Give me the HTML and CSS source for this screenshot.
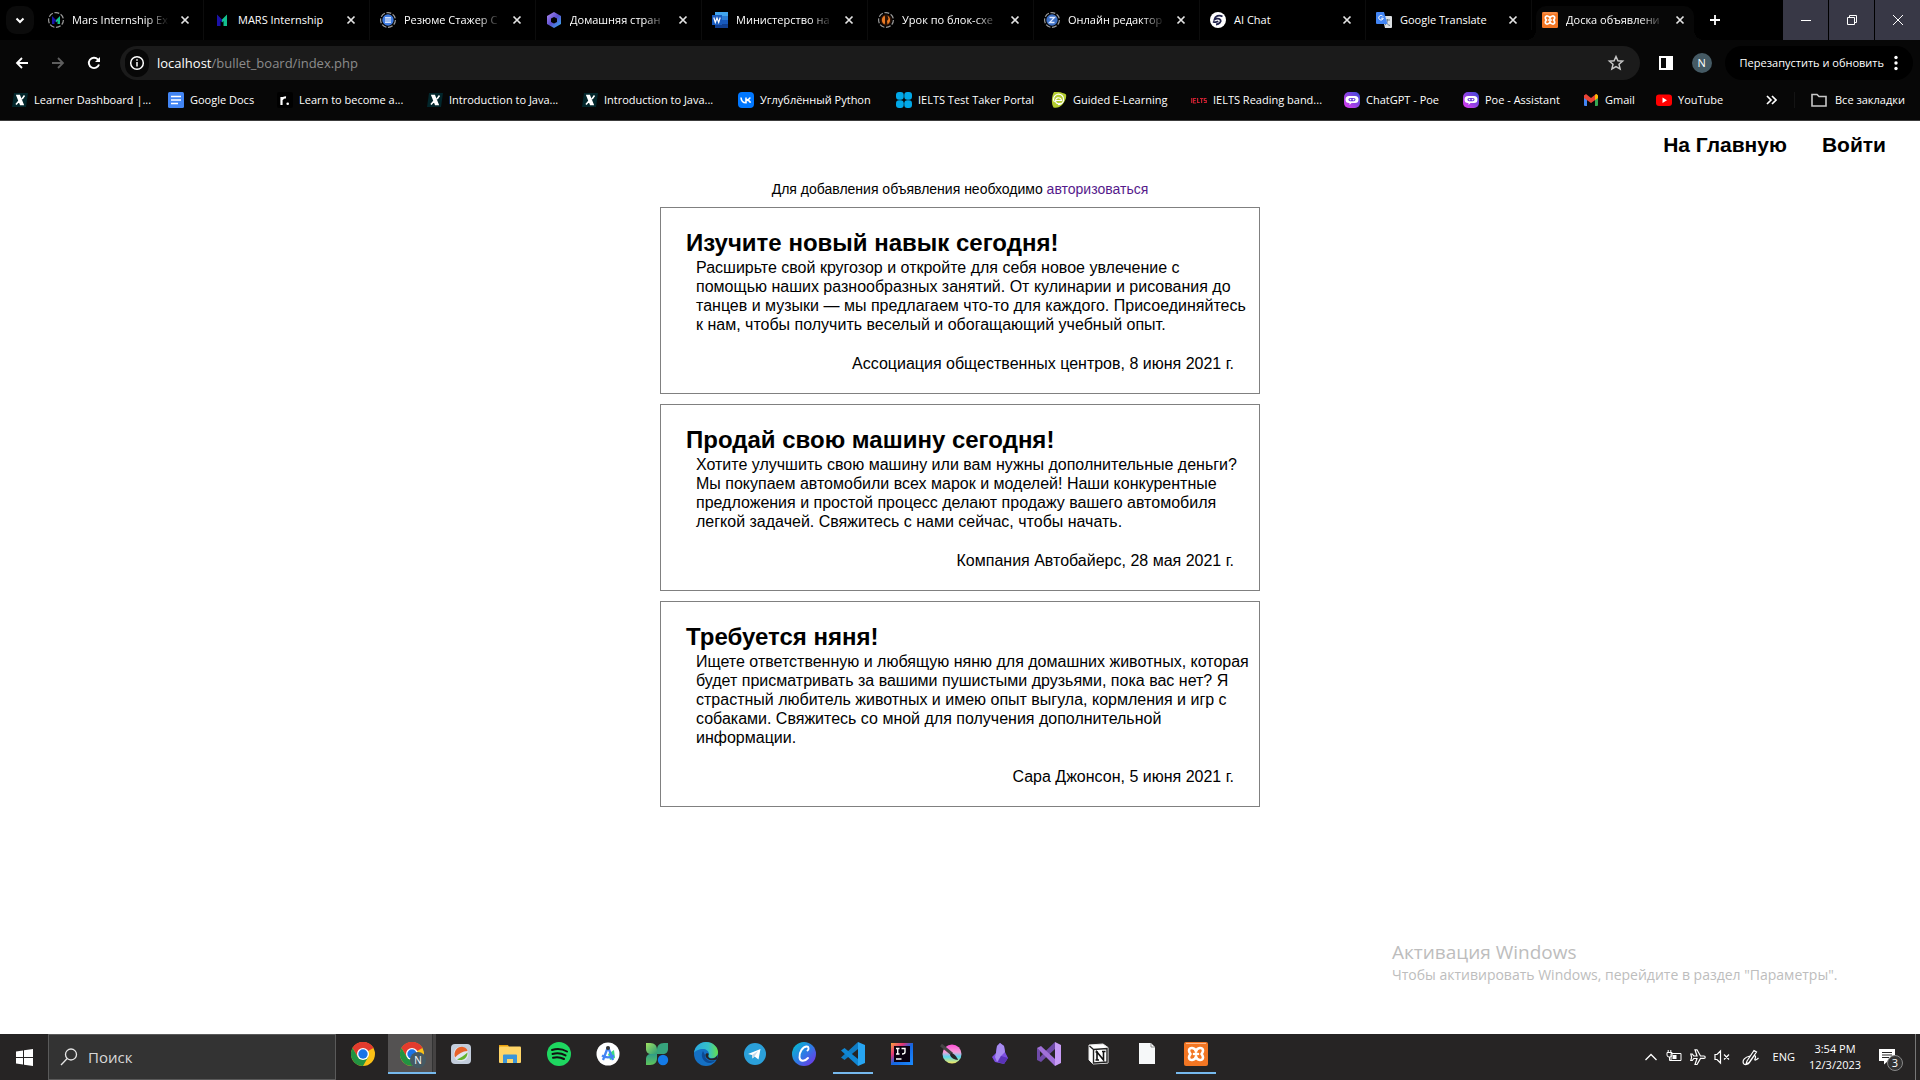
FILE: index.html
```
<!DOCTYPE html>
<html lang="ru">
<head>
<meta charset="utf-8">
<title>Доска объявлений</title>
<link rel="stylesheet" href="styles.css">
</head>
<body>
<svg class="defs" aria-hidden="true">
  <defs>
    <linearGradient id="poe" x1="0" y1="1" x2="1" y2="0"><stop offset="0" stop-color="#e23bf0"/><stop offset="1" stop-color="#3a4bd8"/></linearGradient>
    <linearGradient id="mars" x1="0" y1="0" x2="1" y2="0"><stop offset=".45" stop-color="#1b12a8"/><stop offset=".55" stop-color="#12c08e"/></linearGradient>
    <linearGradient id="m365" x1="0" y1="0" x2="1" y2="1"><stop offset="0" stop-color="#b48cf0"/><stop offset=".5" stop-color="#5a4fd0"/><stop offset="1" stop-color="#35b8f0"/></linearGradient>
    <linearGradient id="canva" x1="0" y1="0" x2="1" y2="1"><stop offset="0" stop-color="#00c4cc"/><stop offset=".5" stop-color="#2d7be5"/><stop offset="1" stop-color="#7d2ae8"/></linearGradient>
    <linearGradient id="edge" x1="0" y1="0" x2="1" y2="0"><stop offset="0" stop-color="#2aa9e0"/><stop offset=".6" stop-color="#35c1c8"/><stop offset="1" stop-color="#66e04a"/></linearGradient>
    <linearGradient id="leafA" x1="0" y1="0" x2="1" y2="1"><stop offset="0" stop-color="#9fe060"/><stop offset="1" stop-color="#2f9c78"/></linearGradient>
    <linearGradient id="leafB" x1="0" y1="0" x2="0" y2="1"><stop offset="0" stop-color="#2f9c88"/><stop offset="1" stop-color="#5fc45a"/></linearGradient>
    <linearGradient id="idea" x1="0" y1="0" x2="1" y2="1"><stop offset="0" stop-color="#f9a13c"/><stop offset=".3" stop-color="#e0337a"/><stop offset=".5" stop-color="#1565e0"/><stop offset="1" stop-color="#1a8cff"/></linearGradient>
    <linearGradient id="krita" x1="0" y1="0" x2="0" y2="1"><stop offset="0" stop-color="#ff4fd8"/><stop offset=".4" stop-color="#f7a0d8"/><stop offset=".65" stop-color="#58d8f0"/><stop offset="1" stop-color="#f8e85a"/></linearGradient>
    <symbol id="i-close" viewBox="0 0 16 16"><path d="M4.500 4.500l7 7M11.500 4.500l-7 7" stroke="#e3e3e3" stroke-width="1.700" fill="none"/></symbol>
    <symbol id="i-ring" viewBox="0 0 16 16"><circle cx="8" cy="8" r="7.400" fill="none" stroke="#9a9a9a" stroke-width="1.200" stroke-dasharray="5 1.600"/></symbol>
    <symbol id="i-x" viewBox="0 0 16 16"><path d="M2 1h14l-2 14H0z" fill="#02262b"/><path d="M5 3.500h2.400l3.600 9H8.600zM12.500 3.500L10 7M7 9l-3 3.500" stroke="#fff" stroke-width="1.600" fill="#fff"/></symbol>
    <symbol id="i-poe" viewBox="0 0 16 16"><rect width="16" height="16" rx="5" fill="url(#poe)"/><path d="M5 4h6a3 3 0 0 1 0 7H7.500L5.500 13v-2H5a3 3 0 0 1 0-7z" fill="#fff"/><rect x="4.500" y="6" width="7" height="3.200" rx="1.600" fill="#6a42d8"/><circle cx="6.500" cy="7.600" r=".8" fill="#fff"/><circle cx="9.500" cy="7.600" r=".8" fill="#fff"/></symbol>
    <symbol id="i-xampp" viewBox="0 0 24 24"><rect width="24" height="24" rx="2" fill="#f37623"/><path d="M2 1.500h20" stroke="#ffb98a" stroke-width="1"/><path d="M12 9.500C11 5 5 5 5 8.500c0 2 1 2.500 1.500 3.500C6 13 5 13.500 5 15.500c0 3.500 6 3.500 7-1 1 4.500 7 4.500 7 1 0-2-1-2.500-1.500-3.500.5-1 1.500-1.500 1.500-3.500 0-3.500-6-3.500-7 1zM10 12h4" fill="none" stroke="#fff" stroke-width="2.600" stroke-linecap="round" stroke-linejoin="round"/></symbol>
    <symbol id="i-chrome" viewBox="0 0 24 24"><circle cx="12" cy="12" r="12" fill="#fbc116"/><path d="M12 12L1.600 6A12 12 0 0 1 22.400 6z" fill="#e33b2e"/><path d="M12 6h10.400A12 12 0 0 0 1.600 6L6.800 15z" fill="#e33b2e"/><path d="M1.600 6A12 12 0 0 0 12 24l5.200-9L12 17.500 6.800 15z" fill="#229342"/><circle cx="12" cy="12" r="6" fill="#fff"/><circle cx="12" cy="12" r="4.700" fill="#1a73e8"/></symbol>
  </defs>
</svg>

<header class="browser">
  <div class="tabstrip">
    <button class="tab-search" aria-label="Поиск вкладок"><svg width="16" height="16" viewBox="0 0 16 16"><path d="M4.500 6.500L8 10l3.500-3.500" fill="none" stroke="#fff" stroke-width="2"/></svg></button>
    <div class="tab"><svg class="fav" viewBox="0 0 16 16"><use href="#i-ring"/><path d="M4 12V4l4 4 4-4v8H9.500V9L8 10.500 6.500 9v3z" fill="url(#mars)"/></svg><span class="tab-title tab-title--cut">Mars Internship Ex</span><button class="tab-close" aria-label="Закрыть"><svg viewBox="0 0 16 16"><use href="#i-close"/></svg></button></div>
    <div class="tab"><svg class="fav" viewBox="0 0 16 16"><path d="M3 14V2.500l5 5 5-5V14h-3.500V9L8 10.500 6.500 9v5z" fill="url(#mars)"/></svg><span class="tab-title">MARS Internship</span><button class="tab-close" aria-label="Закрыть"><svg viewBox="0 0 16 16"><use href="#i-close"/></svg></button></div>
    <div class="tab"><svg class="fav" viewBox="0 0 16 16"><use href="#i-ring"/><circle cx="8" cy="8" r="5.700" fill="#3f7be0"/><path d="M5 5.800h6M5 8h6M5 10.200h6" stroke="#fff" stroke-width="1.200"/></svg><span class="tab-title tab-title--cut">Резюме Стажер С</span><button class="tab-close" aria-label="Закрыть"><svg viewBox="0 0 16 16"><use href="#i-close"/></svg></button></div>
    <div class="tab"><svg class="fav" viewBox="0 0 16 16"><path d="M8 0l7 4v8l-7 4-7-4V4zM8 5L5 6.500v3.500L8 11.500 11 10V6.500z" fill="url(#m365)" fill-rule="evenodd"/></svg><span class="tab-title tab-title--cut">Домашняя стран</span><button class="tab-close" aria-label="Закрыть"><svg viewBox="0 0 16 16"><use href="#i-close"/></svg></button></div>
    <div class="tab"><svg class="fav" viewBox="0 0 16 16"><path d="M3 0h13v4H3z" fill="#41a5ee"/><path d="M3 4h13v4H3z" fill="#2b7cd3"/><path d="M3 8h13v4H3z" fill="#185abd"/><path d="M3 12h13v4H3z" fill="#103f91"/><rect y="3" width="10" height="10" fill="#185abd"/><path d="M1.800 5.500L3.300 10.500 5 6l1.700 4.500 1.500-5" fill="none" stroke="#fff" stroke-width="1.200"/></svg><span class="tab-title tab-title--cut">Министерство на</span><button class="tab-close" aria-label="Закрыть"><svg viewBox="0 0 16 16"><use href="#i-close"/></svg></button></div>
    <div class="tab"><svg class="fav" viewBox="0 0 16 16"><use href="#i-ring"/><circle cx="8" cy="8" r="5.700" fill="#2a1206"/><path d="M6.500 3.500C3 6 3 10 6.500 12.500L7 11V5zM9.500 3.500C13 6 13 10 9.500 12.500L9 9l1.500-2z" fill="#e87a24"/></svg><span class="tab-title tab-title--cut">Урок по блок-схе</span><button class="tab-close" aria-label="Закрыть"><svg viewBox="0 0 16 16"><use href="#i-close"/></svg></button></div>
    <div class="tab"><svg class="fav" viewBox="0 0 16 16"><use href="#i-ring"/><circle cx="8" cy="8" r="5.700" fill="#3c6fc4"/><path d="M5.500 5.500h5l-5 5h5" fill="none" stroke="#dce8ff" stroke-width="1.300"/></svg><span class="tab-title tab-title--cut">Онлайн редактор</span><button class="tab-close" aria-label="Закрыть"><svg viewBox="0 0 16 16"><use href="#i-close"/></svg></button></div>
    <div class="tab"><svg class="fav" viewBox="0 0 16 16"><circle cx="8" cy="8" r="8" fill="#fff"/><path d="M12.500 4.500C9 2.500 5 4 4.500 7.500c2-1.500 5-1 6 .5s-1 4-4.500 4.500M3 9.500c1.500 1 4 1 5-.5" fill="none" stroke="#20224a" stroke-width="1.800"/></svg><span class="tab-title">AI Chat</span><button class="tab-close" aria-label="Закрыть"><svg viewBox="0 0 16 16"><use href="#i-close"/></svg></button></div>
    <div class="tab"><svg class="fav" viewBox="0 0 16 16"><path d="M6 4h9a1 1 0 0 1 1 1v10a1 1 0 0 1-1 1H9z" fill="#dcdfe3"/><path d="M9 8h5M11.500 7v1c0 2-1 4-2.500 5M10 10c1 2 2 3 4 3.500" stroke="#6c7f8c" fill="none"/><path d="M1 0h7l3.500 12H1a1 1 0 0 1-1-1V1a1 1 0 0 1 1-1z" fill="#4285f4"/><path d="M7 4.500A2.300 2.300 0 1 0 7.300 6.200H5.200" fill="none" stroke="#fff"/></svg><span class="tab-title">Google Translate</span><button class="tab-close" aria-label="Закрыть"><svg viewBox="0 0 16 16"><use href="#i-close"/></svg></button></div>
    <div class="tab tab--active"><svg class="fav" viewBox="0 0 24 24"><use href="#i-xampp"/></svg><span class="tab-title tab-title--cut">Доска объявлени</span><button class="tab-close" aria-label="Закрыть"><svg viewBox="0 0 16 16"><use href="#i-close"/></svg></button></div>
    <button class="new-tab" aria-label="Новая вкладка"><svg width="16" height="16" viewBox="0 0 16 16"><path d="M8 3v10M3 8h10" stroke="#fff" stroke-width="1.800"/></svg></button>
    <div class="window-controls">
      <button aria-label="Свернуть"><svg width="12" height="12" viewBox="0 0 12 12"><path d="M1 6.500h10" stroke="#fff"/></svg></button>
      <button aria-label="Развернуть"><svg width="12" height="12" viewBox="0 0 12 12"><path d="M1.500 3.500h7v7h-7zM3.500 3.500v-2h7v7h-2" fill="none" stroke="#fff"/></svg></button>
      <button aria-label="Закрыть окно"><svg width="12" height="12" viewBox="0 0 12 12"><path d="M1 1l10 10M11 1L1 11" stroke="#fff"/></svg></button>
    </div>
  </div>

  <div class="toolbar">
    <button class="tool" aria-label="Назад"><svg width="16" height="16" viewBox="0 0 16 16"><path d="M14 8H3M8 3L3 8l5 5" fill="none" stroke="#fff" stroke-width="1.800"/></svg></button>
    <button class="tool" aria-label="Вперёд"><svg width="16" height="16" viewBox="0 0 16 16"><path d="M2 8h11M8 3l5 5-5 5" fill="none" stroke="#5e5e5e" stroke-width="1.800"/></svg></button>
    <button class="tool" aria-label="Обновить"><svg width="16" height="16" viewBox="0 0 16 16"><path d="M13 9.500A5.200 5.200 0 1 1 11.800 4.300L13 5.500" fill="none" stroke="#fff" stroke-width="1.900"/><path d="M14 2v5H9z" fill="#fff"/></svg></button>
    <div class="omnibox">
      <span class="site-info"><svg width="16" height="16" viewBox="0 0 16 16"><circle cx="8" cy="8" r="6.300" fill="none" stroke="#fff" stroke-width="1.500"/><path d="M8 7v4.500M8 4.300v1.500" stroke="#fff" stroke-width="1.500"/></svg></span>
      <a class="url" href="#"><span class="url-host">localhost</span>/bullet_board/index.php</a>
      <button class="star" aria-label="В закладки"><svg width="18" height="18" viewBox="0 0 18 18"><path d="M9 2.500l1.900 4.300 4.700.4-3.600 3.100 1.100 4.600L9 12.500l-4.100 2.400L6 10.300 2.400 7.200l4.700-.4z" fill="none" stroke="#c7c7c7" stroke-width="1.500"/></svg></button>
    </div>
    <button class="side-panel" aria-label="Боковая панель"><svg width="16" height="16" viewBox="0 0 16 16"><path d="M1 1h14v14H1zM3 3v10h5V3z" fill="#fff" fill-rule="evenodd"/></svg></button>
    <span class="avatar">N</span>
    <button class="update">Перезапустить и обновить<svg width="4" height="16" viewBox="0 0 4 16"><circle cx="2" cy="2.500" r="1.700" fill="#fff"/><circle cx="2" cy="8" r="1.700" fill="#fff"/><circle cx="2" cy="13.500" r="1.700" fill="#fff"/></svg></button>
  </div>

  <nav class="bookmarks" aria-label="Закладки">
    <a class="bm" href="#"><svg viewBox="0 0 16 16"><use href="#i-x"/></svg>Learner Dashboard |...</a>
    <a class="bm" href="#"><svg viewBox="0 0 16 16"><rect width="16" height="16" rx="1.500" fill="#4285f4"/><path d="M3 4.500h10M3 8h10M3 11.500h7" stroke="#fff" stroke-width="1.700"/></svg>Google Docs</a>
    <a class="bm" href="#"><svg viewBox="0 0 16 16"><rect width="16" height="16" rx="2" fill="#000"/><path d="M4.500 13V5M5 7.500c.8-1.700 2-2.200 4-2" fill="none" stroke="#fff" stroke-width="2.200"/><circle cx="10.700" cy="11.800" r="1.300" fill="#fff"/></svg>Learn to become a...</a>
    <a class="bm" href="#"><svg viewBox="0 0 16 16"><use href="#i-x"/></svg>Introduction to Java...</a>
    <a class="bm" href="#"><svg viewBox="0 0 16 16"><use href="#i-x"/></svg>Introduction to Java...</a>
    <a class="bm" href="#"><svg viewBox="0 0 16 16"><rect width="16" height="16" rx="4" fill="#07f"/><path d="M3 5.500c.3 3.500 2 5.300 5 5.300V5.500M8 8c2 0 3.500-1 4.200-2.500M8.500 8c2 .2 3.500 1.300 4 2.800" fill="none" stroke="#fff" stroke-width="1.600"/></svg>Углублённый Python</a>
    <a class="bm" href="#"><svg viewBox="0 0 16 16" fill="#00a8e8"><rect width="7.700" height="7.700" rx="3"/><rect x="8.300" width="7.700" height="7.700" rx="3"/><rect y="8.300" width="7.700" height="7.700" rx="3"/><rect x="8.300" y="8.300" width="7.700" height="7.700" rx="3"/></svg>IELTS Test Taker Portal</a>
    <a class="bm" href="#"><svg viewBox="0 0 16 16"><path d="M3 0c4-.5 9 .5 12 2.500.8 3-1 7-4 10.500-2 2-5 3.500-8.500 2.500C0 12 .5 4 3 0z" fill="#b4cc2e"/><path d="M5 8.500h5.500a3 3 0 1 0-1 2.500M3.500 10A5 5 0 1 1 12.500 8c0 3-3 5-5.500 4.500" fill="none" stroke="#fff" stroke-width="1.200"/></svg>Guided E-Learning</a>
    <a class="bm" href="#"><svg viewBox="0 0 16 16"><path d="M.7 6v5M2.500 6v5h2.700M2.500 6.500h2.700M2.500 8.500h2.200M6.600 6v4.500h2.200M9 6.500h3.200M10.600 6.500V11M15.500 6.500h-2.200v2h2v2h-2.400" fill="none" stroke="#c8202f" stroke-width="1.200"/></svg>IELTS Reading band...</a>
    <a class="bm" href="#"><svg viewBox="0 0 16 16"><use href="#i-poe"/></svg>ChatGPT - Poe</a>
    <a class="bm" href="#"><svg viewBox="0 0 16 16"><use href="#i-poe"/></svg>Poe - Assistant</a>
    <a class="bm" href="#"><svg viewBox="0 0 16 16"><path d="M1 3.500h3V14H2a1 1 0 0 1-1-1z" fill="#4285f4"/><path d="M12 3.500h3V13a1 1 0 0 1-1 1h-2z" fill="#34a853"/><path d="M1 3.500L3 2l5 4 5-4 2 1.500V6l-7 5-7-5z" fill="#ea4335"/><path d="M12 3l1.500-1L15 3.500V6l-3 2z" fill="#fbbc04"/></svg>Gmail</a>
    <a class="bm" href="#"><svg viewBox="0 0 16 16"><rect y="2.500" width="16" height="11.500" rx="3" fill="red"/><path d="M6.500 5.500v5.500l4.500-2.700z" fill="#fff"/></svg>YouTube</a>
    <button class="bm-more" aria-label="Ещё"><svg width="12" height="12" viewBox="0 0 12 12"><path d="M2 2l4 4-4 4M7 2l4 4-4 4" fill="none" stroke="#fff" stroke-width="1.700"/></svg></button>
    <a class="bm bm--all" href="#"><svg viewBox="0 0 16 16"><path d="M1 2.500h5l2 2h7v9.500H1z" fill="none" stroke="#c7c7c7" stroke-width="1.600"/></svg>Все закладки</a>
  </nav>
</header>

<main class="page">
  <nav class="site-nav"><a href="#">На Главную</a><a href="#">Войти</a></nav>
  <p class="notice">Для добавления объявления необходимо <a href="#">авторизоваться</a></p>
  <section class="board">
    <article class="ad">
      <h2>Изучите новый навык сегодня!</h2>
      <p class="ad-text">Расширьте свой кругозор и откройте для себя новое увлечение с<br>помощью наших разнообразных занятий. От кулинарии и рисования до<br>танцев и музыки — мы предлагаем что-то для каждого. Присоединяйтесь<br>к нам, чтобы получить веселый и обогащающий учебный опыт.</p>
      <p class="ad-author">Ассоциация общественных центров, 8 июня 2021 г.</p>
    </article>
    <article class="ad">
      <h2>Продай свою машину сегодня!</h2>
      <p class="ad-text">Хотите улучшить свою машину или вам нужны дополнительные деньги?<br>Мы покупаем автомобили всех марок и моделей! Наши конкурентные<br>предложения и простой процесс делают продажу вашего автомобиля<br>легкой задачей. Свяжитесь с нами сейчас, чтобы начать.</p>
      <p class="ad-author">Компания Автобайерс, 28 мая 2021 г.</p>
    </article>
    <article class="ad">
      <h2>Требуется няня!</h2>
      <p class="ad-text">Ищете ответственную и любящую няню для домашних животных, которая<br>будет присматривать за вашими пушистыми друзьями, пока вас нет? Я<br>страстный любитель животных и имею опыт выгула, кормления и игр с<br>собаками. Свяжитесь со мной для получения дополнительной<br>информации.</p>
      <p class="ad-author">Сара Джонсон, 5 июня 2021 г.</p>
    </article>
  </section>
  <aside class="watermark">
    <p class="watermark-title">Активация Windows</p>
    <p>Чтобы активировать Windows, перейдите в раздел "Параметры".</p>
  </aside>
</main>

<footer class="taskbar">
  <button class="start" aria-label="Пуск"><svg width="17" height="17" viewBox="0 0 17 17" fill="#fff"><path d="M0 2.500L7 1.500V8H0zM8 1.300L17 0v8H8zM0 9h7v6.500l-7-1zM8 9h9v8l-9-1.300z"/></svg></button>
  <label class="search"><svg width="18" height="18" viewBox="0 0 18 18"><circle cx="11" cy="6.500" r="5.500" fill="none" stroke="#e6e6e6" stroke-width="1.300"/><path d="M7.200 10.500L1 17" stroke="#e6e6e6" stroke-width="1.300"/></svg><input type="text" placeholder="Поиск" aria-label="Поиск"></label>
  <div class="apps">
    <button class="app" aria-label="Chrome"><svg viewBox="0 0 24 24"><use href="#i-chrome"/></svg></button>
    <button class="app app--active" aria-label="Chrome N"><svg viewBox="0 0 24 24"><use href="#i-chrome"/></svg><span class="app-badge">N</span></button>
    <button class="app" aria-label="Sandbox"><svg viewBox="0 0 24 24"><rect x="2" y="2" width="20" height="20" rx="4" fill="#c3cddc"/><circle cx="12" cy="12" r="7.500" fill="#dfe5ee"/><path d="M6 15.500C4 9 9 4 14 5c3 .5 4 2 4.500 4-5 0-9 3-12.500 6.500z" fill="#e8622a"/><path d="M18.500 10.500c0 6-5 9-10.500 7 3-1.500 7-3.500 10.500-7z" fill="#64b32c"/></svg></button>
    <button class="app" aria-label="Проводник"><svg viewBox="0 0 24 24"><path d="M1 3h9l1 2H1z" fill="#e8a00c"/><rect x="1" y="4.500" width="22" height="16.500" rx="1" fill="#ffd567"/><path d="M5 21v-7.500a1 1 0 0 1 1-1h12a1 1 0 0 1 1 1V21h-4v-4H9v4z" fill="#3b95d8"/></svg></button>
    <button class="app" aria-label="Spotify"><svg viewBox="0 0 24 24"><circle cx="12" cy="12" r="12" fill="#1ed760"/><path d="M5 8c5-1.500 10.500-1 15 1.500M5.500 12c4.500-1.300 9-.8 13 1.400M6 15.700c4-1 7.500-.6 11 1.300" fill="none" stroke="#111" stroke-width="2" stroke-linecap="round"/></svg></button>
    <button class="app" aria-label="Android Studio"><svg viewBox="0 0 24 24"><circle cx="12" cy="12" r="11.500" fill="#fff"/><path d="M12 12l6-4 1 8-5 2z" fill="#3ddc84"/><path d="M12 5L7 18M12 5l5 13M6 13.500c4 2.500 8 2.500 12 0" fill="none" stroke="#4285f4" stroke-width="2.300"/><circle cx="12" cy="6" r="2" fill="#333"/></svg></button>
    <button class="app" aria-label="Leaves"><svg viewBox="0 0 24 24"><path d="M1 1h4c5 0 7 3 7 7v4H6c-3 0-5-2-5-5z" fill="url(#leafA)"/><path d="M23 1h-4c-5 0-7 3-7 7v4h6c3 0 5-2 5-5z" fill="#36a37c"/><path d="M1 23h4c5 0 7-3 7-7v-4H6c-3 0-5 2-5 5z" fill="url(#leafB)"/><circle cx="18" cy="18" r="5.200" fill="#147be8"/></svg></button>
    <button class="app" aria-label="Edge"><svg viewBox="0 0 24 24"><circle cx="12" cy="12" r="12" fill="#1470c4"/><path d="M0 11C1 4 6 0 12 0c7 0 12 5 12 10 0 4-3 6-6 6-4 0-4-2-3-4 0-3-3-5-6-5-4 0-8 2-9 4z" fill="url(#edge)"/><path d="M9 9c-3 5 0 11 6 12 3 .5 5-1 7.500-3.500C19 21 11 19 11 13z" fill="#0c4a94"/><path d="M14.800 12c-1 2-1 4.500 3.200 4.500 2 0 4-1 5.500-3.500l-.5 4.500-2.500.5c-4 1-9-1-9-5 0-2 2.500-2.500 3.300-1z" fill="#262424"/></svg></button>
    <button class="app" aria-label="Telegram"><svg viewBox="0 0 24 24"><circle cx="12" cy="12" r="11" fill="#2ba0da"/><path d="M5 12l12.500-5-2 10.500-4-3-2 2-.5-3.500z" fill="#fff"/><path d="M9 13l6-4-3.500 5.500-2 2z" fill="#c8daea"/></svg></button>
    <button class="app" aria-label="Canva"><svg viewBox="0 0 24 24"><circle cx="12" cy="12" r="12" fill="url(#canva)"/><path d="M15.500 8.500c1.500-1 1.500-4-.7-4-4 0-8 6-7.300 11 .5 4 5 4.500 8.500.5" fill="none" stroke="#fff" stroke-width="1.900" stroke-linecap="round"/></svg></button>
    <button class="app app--running" aria-label="VS Code"><svg viewBox="0 0 24 24"><path d="M17 0v7L3.500 18 0 15.500z" fill="#0f7cc4"/><path d="M17 24v-7L3.500 6 0 8.500z" fill="#1087d4"/><path d="M17 0l7 3v18l-7 3z" fill="#27a5f2"/></svg></button>
    <button class="app" aria-label="IntelliJ IDEA"><svg viewBox="0 0 24 24"><rect x="1" y="1" width="22" height="22" fill="url(#idea)"/><rect x="4" y="4" width="16" height="16" fill="#0a0010"/><path d="M6 6.500h3.500M7.700 6.500V12M6 12h3.500M11.500 6.500h3.500V10c0 2-1.500 2-3 2M6 17h5.500" fill="none" stroke="#fff" stroke-width="1.400"/></svg></button>
    <button class="app" aria-label="Krita"><svg viewBox="0 0 24 24"><circle cx="13" cy="12" r="9.500" fill="url(#krita)"/><path d="M2 3l11 9" stroke="#454545" stroke-width="3"/><path d="M12 11c3 0 6 4 7 7-4-.5-7-2-8-5z" fill="#252525"/></svg></button>
    <button class="app" aria-label="Obsidian"><svg viewBox="0 0 24 24"><path d="M12 1l4 3 1 6 3 6-4 6-9-2-3-5 4-4 1-7z" fill="#7c4fe0"/><path d="M12 1l4 3 1 6-4 4-4 6-2-5 1-4 1-7z" fill="#a78bf0"/><path d="M13 14l7 2-4 6-6-2z" fill="#5a33b8"/></svg></button>
    <button class="app" aria-label="Visual Studio"><svg viewBox="0 0 24 24"><path d="M0 6v12l4 2L18 7V0L6 11.500zM3 9v6l3-3z" fill="#6f4aa8" fill-rule="evenodd"/><path d="M4 4l14 13v7L0 6z" fill="#a070d8"/><path d="M18 0l6 3v18l-6 3z" fill="#c79bf5"/></svg></button>
    <button class="app" aria-label="Notion"><svg viewBox="0 0 24 24"><path d="M3 3l14-1 5 3.500v15.500L7 22l-4-4z" fill="#fff" stroke="#e8e8e8"/><path d="M7.500 7.500L21 6.500v13.500l-13.500 1zM3.500 4l4 3.500" fill="#fff" stroke="#222" stroke-width="1.400"/><path d="M11 18V10l6.500 8V9.500M9.500 10H12M16 9.500h3.500M9.500 18H13" fill="none" stroke="#111" stroke-width="1.600"/></svg></button>
    <button class="app" aria-label="Документ"><svg viewBox="0 0 24 24"><path d="M4 1h12l4 4v17H4z" fill="#f6f8f9"/><path d="M16 1v4h4z" fill="#fff" stroke="#777" stroke-width=".8"/></svg></button>
    <button class="app app--running" aria-label="XAMPP"><svg viewBox="0 0 24 24"><use href="#i-xampp"/></svg></button>
  </div>
  <div class="tray">
    <button aria-label="Скрытые значки"><svg width="14" height="16" viewBox="0 0 14 16"><path d="M1.500 11L7 5.500l5.500 5.500" fill="none" stroke="#fff" stroke-width="1.300"/></svg></button>
    <svg width="16" height="16" viewBox="0 0 16 16"><path d="M5 4.500h10v7H5zM1 3.500h5v2.500a2 2 0 0 1-2 2h-1a2 2 0 0 1-2-2zM2.200 1v2.500M4.800 1v2.500M3.500 8v3.500H5" fill="none" stroke="#fff"/><path d="M6.500 6h4v4h-4z" fill="#fff"/></svg>
    <svg width="16" height="16" viewBox="0 0 16 16"><path d="M.8 5h1.500l1.500 2H7L5 .8h2L10.500 7H14a1.200 1.200 0 0 1 0 2.400h-3.500L7 15.500H5l2-6H3.800l-1.500 2H.8l.8-3.200z" fill="none" stroke="#fff" stroke-width="1.200"/></svg>
    <svg width="16" height="16" viewBox="0 0 16 16"><path d="M1 5.500h2L6.500 2v12L3 10.500H1zM10 5.500l5 5M15 5.500l-5 5" fill="none" stroke="#fff" stroke-width="1.200"/></svg>
    <svg class="pen" width="17" height="17" viewBox="0 0 17 17"><path d="M5 12L12 1.500l2.500 1.500L7 13.500l-3 1.500zM8 7C3 8 0 11 1.500 14.500c1 2 5 1 6-1L12 7c1.500-1 2 1 1 3s1.500 1 3.500-1" fill="none" stroke="#fff" stroke-width="1.200"/></svg>
    <span class="lang">ENG</span>
    <time class="clock">3:54 PM<br>12/3/2023</time>
    <button class="notes" aria-label="Уведомления"><svg width="16" height="16" viewBox="0 0 16 16"><path d="M0 0h16v12H9l-4 3.500V12H0z" fill="#fff"/><path d="M3 3.500h10M3 6h10M3 8.500h7" stroke="#242424"/></svg><span class="count">3</span></button>
  </div>
</footer>
</body>
</html>
```
FILE: styles.css
```
* { box-sizing: border-box; }

body {
  margin: 0;
  min-height: 100vh;
  display: flex;
  flex-direction: column;
  font-family: "Liberation Sans", Arial, sans-serif;
  background: #fff;
  color: #000;
}

p, h2 { margin: 0; }
a { text-decoration: none; }
button {
  padding: 0;
  border: 0;
  background: none;
  color: inherit;
  font: inherit;
  display: flex;
  align-items: center;
  justify-content: center;
}
svg { display: block; flex: none; }
.defs { position: absolute; width: 0; height: 0; }

/* Browser window */
.browser {
  background: #070707;
  color: #fff;
  font: 11px/16px "Open Sans", "Noto Sans", sans-serif;
  border-bottom: 1px solid #3c3c3c;
}
.tabstrip {
  display: flex;
  height: 40px;
  padding-left: 6px;
  background: #000;
}
.tab-search {
  width: 28px;
  height: 28px;
  margin: 6px 4px 0 0;
  border-radius: 10px;
  background: #0b0b0b;
}
.tab {
  position: relative;
  display: flex;
  align-items: center;
  flex: 0 1 166px;
  min-width: 0;
  padding: 0 10px;
  border-right: 1px solid #0c0c0c;
}
.tab--active {
  flex-basis: 158px;
  height: 34px;
  margin: 6px 4px 0;
  padding: 0 6px 6px;
  border: 0;
  border-radius: 10px 10px 0 0;
  background: #070707;
}
.tab--active::before,
.tab--active::after {
  content: "";
  position: absolute;
  bottom: 0;
  width: 10px;
  height: 10px;
}
.tab--active::before { right: 100%; background: radial-gradient(circle at 0 0, #000 10px, #070707 10px); }
.tab--active::after { left: 100%; background: radial-gradient(circle at 100% 0, #000 10px, #070707 10px); }
.fav { width: 16px; height: 16px; }
.tab-title {
  flex: 1;
  min-width: 0;
  margin: 0 8px;
  white-space: nowrap;
}
.tab-title--cut {
  -webkit-mask-image: linear-gradient(90deg, #000 76%, transparent);
  mask-image: linear-gradient(90deg, #000 76%, transparent);
}
.tab-close svg { width: 16px; height: 16px; }
.new-tab { width: 28px; margin-left: 3px; }
.window-controls { display: flex; gap: 1px; margin-left: auto; }
.window-controls button { width: 45px; background: #383846; }

.toolbar {
  display: flex;
  align-items: center;
  height: 46px;
  padding: 0 7px 0 4px;
}
.tool { width: 36px; height: 34px; }
.omnibox {
  flex: 1;
  display: flex;
  align-items: center;
  height: 34px;
  margin-left: 8px;
  padding: 0 15px 0 5px;
  border-radius: 17px;
  background: #1b1b1b;
}
.site-info {
  display: flex;
  align-items: center;
  justify-content: center;
  width: 24px;
  height: 28px;
  border-radius: 12px;
  background: #070707;
}
.url {
  flex: 1;
  margin-left: 8px;
  font-size: 13px;
  line-height: 18px;
  color: #8c8c8c;
}
.url-host { color: #fff; }
.side-panel { width: 16px; margin-left: 18px; }
.avatar {
  width: 20px;
  height: 20px;
  margin: 0 13px 0 18px;
  border-radius: 50%;
  background: #455a64;
  line-height: 20px;
  text-align: center;
}
.update {
  height: 34px;
  padding: 0 15px;
  gap: 10px;
  border-radius: 17px;
  background: #000;
}

.bookmarks {
  display: grid;
  grid-template-columns: 156px 109px 150px 155px 156px 158px 155px 140px 153px 119px 120px 73px 1fr 30px 126px;
  align-items: center;
  height: 34px;
  padding: 0 0 6px 12px;
}
.bm {
  display: flex;
  align-items: center;
  gap: 6px;
  color: #fff;
  white-space: nowrap;
}
.bm svg { width: 16px; height: 16px; }
.bm--all { padding-left: 16px; border-left: 1px solid #141414; gap: 8px; }
.bm-more { height: 16px; padding-right: 16px; }

/* Site */
.page {
  position: relative;
  flex: 1;
  padding: 12px 0 40px;
}
.site-nav {
  display: flex;
  justify-content: flex-end;
  gap: 35px;
  padding: 0 34px;
  font-size: 21px;
  line-height: 24px;
  font-weight: bold;
}
.site-nav a { color: #000; }
.notice {
  margin: 24px 0 10px;
  text-align: center;
  font-size: 14px;
  line-height: 16px;
}
.notice a { color: #551a8b; }
.board {
  display: flex;
  flex-direction: column;
  gap: 10px;
  width: 600px;
  max-width: 100%;
  margin: 0 auto;
}
.ad {
  padding: 20px 25px;
  border: 1px solid #808080;
  font-size: 16px;
  line-height: 19px;
}
.ad h2 { font-size: 24px; line-height: 30px; }
.ad-text { padding-left: 10px; white-space: nowrap; }
.ad-author { margin-top: 20px; text-align: right; }

.watermark {
  position: absolute;
  right: 74px;
  bottom: 49px;
  width: 454px;
  font: 14px/20px "Open Sans", "Noto Sans", sans-serif;
  color: #bdbdbd;
}
.watermark-title { font-size: 19px; line-height: 26px; }

/* Taskbar */
.taskbar {
  display: flex;
  height: 46px;
  background: #262424;
  color: #fff;
  font: 11px/16px "Open Sans", "Noto Sans", sans-serif;
}
.start { width: 48px; }
.search {
  display: flex;
  align-items: center;
  gap: 10px;
  width: 288px;
  padding: 0 11px;
  border: 1px solid #5a5a5a;
  background: #333;
}
.search input {
  flex: 1;
  min-width: 0;
  padding: 0;
  border: 0;
  outline: 0;
  background: none;
  color: #fff;
  font: 15px/20px "Open Sans", "Noto Sans", sans-serif;
}
.search input::placeholder { color: #d8d8d8; opacity: 1; }
.apps { display: flex; gap: 1px; padding-left: 3px; }
.app {
  position: relative;
  width: 48px;
  height: 40px;
}
.app svg { width: 24px; height: 24px; }
.app--active { background: linear-gradient(90deg, #545252 44px, #333 44px, #333 45px, #454343 45px); }
.app--active::after,
.app--running::after {
  content: "";
  position: absolute;
  left: 4px;
  right: 4px;
  bottom: 0;
  height: 2px;
  background: #76b9ed;
}
.app--active::after { left: 0; right: 0; }
.app-badge {
  position: absolute;
  right: 10px;
  bottom: 6px;
  width: 16px;
  height: 16px;
  border-radius: 50%;
  background: #455a64;
  font-size: 10px;
  text-align: center;
}
.tray {
  display: flex;
  align-items: center;
  gap: 8px;
  margin-left: auto;
  margin-right: 4px;
  padding-right: 20px;
  border-right: 1px solid #777;
}
.pen { margin-left: 4px; }
.lang { margin: 0 6px; }
.clock { width: 52px; text-align: center; white-space: nowrap; }
.notes { position: relative; margin-left: 10px; }
.count {
  position: absolute;
  left: 8px;
  top: 6px;
  width: 16px;
  height: 16px;
  border: 1px solid #8a8a8a;
  border-radius: 50%;
  background: #333;
  line-height: 14px;
  text-align: center;
}
```
